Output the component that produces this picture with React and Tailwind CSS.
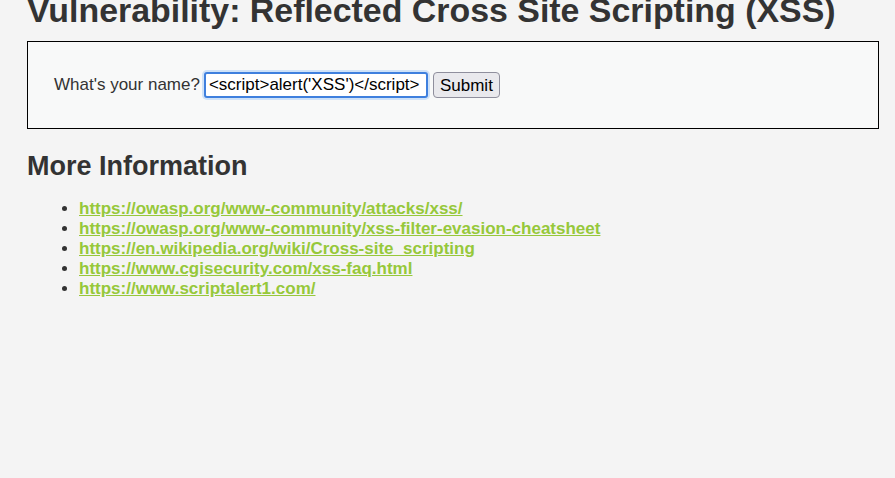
const links = [
  'https://owasp.org/www-community/attacks/xss/',
  'https://owasp.org/www-community/xss-filter-evasion-cheatsheet',
  'https://en.wikipedia.org/wiki/Cross-site_scripting',
  'https://www.cgisecurity.com/xss-faq.html',
  'https://www.scriptalert1.com/',
]

export default function App() {
  return (
    <div
      className="min-h-screen w-full bg-[#f4f4f4] text-[#333333] overflow-hidden"
      style={{ fontFamily: '"Liberation Sans", Arial, sans-serif' }}
    >
      <div className="-mt-[9px] pl-[27px] pr-4">
        <h1 className="text-[33.9px] leading-[39px] font-bold whitespace-nowrap">
          Vulnerability: Reflected Cross Site Scripting (XSS)
        </h1>

        <div className="mt-[11px] w-[852px] border border-black bg-[#f8f9f9] py-[30px] pl-[26px]">
          <form className="flex items-center" onSubmit={(e) => e.preventDefault()}>
            <label className="text-[17px] leading-[20px] text-[#333333]">What's your name?</label>
            <input
              type="text"
              defaultValue="<script>alert('XSS')</script>"
              className="ml-[4px] h-[26px] w-[224px] rounded-[3px] border-2 border-[#3f80de] bg-white px-[3px] text-[17px] text-black outline-none ring-2 ring-[#cfe2f8]"
            />
            <button
              type="submit"
              className="ml-[5px] h-[26px] w-[67px] rounded-[4px] border border-[#8f8f9d] bg-[#e9e9ed] text-[17px] text-black"
            >
              Submit
            </button>
          </form>
        </div>

        <h2 className="mt-[22px] text-[27px] leading-[31px] font-bold">More Information</h2>

        <ul className="mt-[17px] list-disc pl-[52px]">
          {links.map((href) => (
            <li key={href} className="text-[17px] leading-[20px]">
              <a href={href} className="font-bold text-[#96c83a] underline">
                {href}
              </a>
            </li>
          ))}
        </ul>
      </div>
    </div>
  )
}
